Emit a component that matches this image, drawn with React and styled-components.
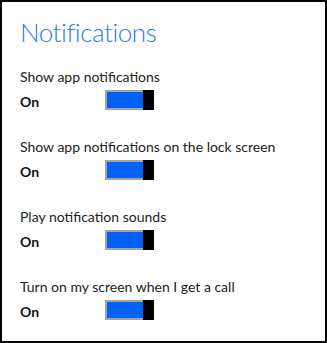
import React from "react";
import styled, { createGlobalStyle } from "styled-components";

const Global = createGlobalStyle`
  html, body { margin: 0; padding: 0; background: #fff; }
  body { font-family: Lato, "Liberation Sans", sans-serif; }
`;

const Panel = styled.div`
  box-sizing: border-box;
  width: 327px;
  height: 343px;
  border: 2px solid #000;
  padding: 12px 18px 0 18px;
  background: #fff;
`;

const Title = styled.h1`
  margin: 0 0 18px 0;
  font-family: Lato, sans-serif;
  font-weight: 300;
  font-size: 26px;
  line-height: 36px;
  letter-spacing: -0.45px;
  color: #2b7de9;
`;

const List = styled.div`
  display: flex;
  flex-direction: column;
  gap: 28px;
`;

const Setting = styled.div`
  display: flex;
  flex-direction: column;
  gap: 4px;
`;

const Label = styled.div`
  font-size: 14px;
  line-height: 18px;
  color: #222;
`;

const Control = styled.div`
  display: flex;
  align-items: flex-start;
  height: 20px;
`;

const State = styled.span`
  width: 85px;
  font-size: 14px;
  font-weight: 700;
  line-height: 20px;
  padding-top: 2px;
  color: #111;
`;

const Toggle = styled.div`
  display: flex;
  height: 20px;
`;

const Track = styled.div`
  box-sizing: border-box;
  width: 38px;
  height: 20px;
  border: 2px solid #a3a3a3;
  border-right: none;
  background: ${(p) => (p.$on ? "#0062f5" : "#fff")};
`;

const Thumb = styled.div`
  width: 11px;
  height: 20px;
  background: #000;
`;

const settings = [
  "Show app notifications",
  "Show app notifications on the lock screen",
  "Play notification sounds",
  "Turn on my screen when I get a call",
];

export default function App() {
  return (
    <>
      <Global />
      <Panel>
        <Title>Notifications</Title>
        <List>
          {settings.map((s) => (
            <Setting key={s}>
              <Label>{s}</Label>
              <Control>
                <State>On</State>
                <Toggle>
                  <Track $on />
                  <Thumb />
                </Toggle>
              </Control>
            </Setting>
          ))}
        </List>
      </Panel>
    </>
  );
}
